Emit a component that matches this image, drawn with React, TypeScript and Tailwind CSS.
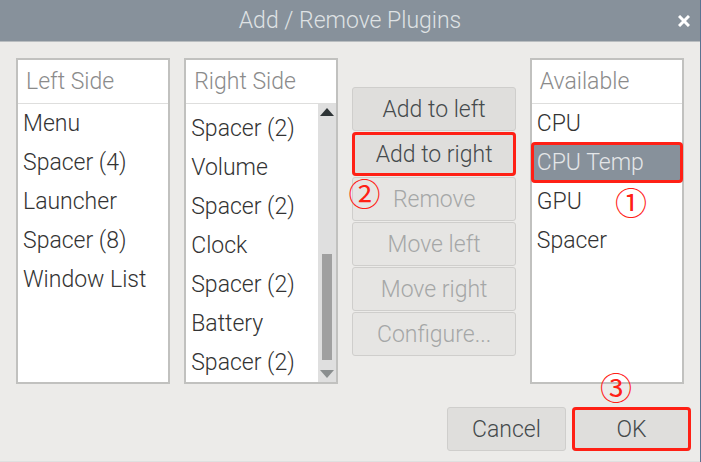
import { useState } from "react";
import type { ReactNode } from "react";

const leftItems = ["Menu", "Spacer (4)", "Launcher", "Spacer (8)", "Window List"];
const rightItems = ["Spacer (2)", "Volume", "Spacer (2)", "Clock", "Spacer (2)", "Battery", "Spacer (2)"];
const availableItems = ["CPU", "CPU Temp", "GPU", "Spacer"];

function Highlight() {
  return <span className="pointer-events-none absolute -inset-px rounded-sm border-3 border-[#ff2015]" />;
}

function Step({ className, children }: { className: string; children: ReactNode }) {
  return (
    <span
      className={`pointer-events-none absolute z-10 flex size-8 items-center justify-center font-['Noto_Sans_CJK_SC',sans-serif] text-[32px] leading-8 font-normal text-[#ff2015] ${className}`}
    >
      {children}
    </span>
  );
}

function ListPanel({
  title,
  items,
  selected,
  onSelect,
  scrollbar,
}: {
  title: string;
  items: string[];
  selected?: string;
  onSelect?: (item: string) => void;
  scrollbar?: boolean;
}) {
  return (
    <section className="flex min-w-0 flex-col border-2 border-[#c1c1bf] bg-white">
      <h2 className="h-11 border-b border-[#dededd] px-2 leading-[43px] text-[#8b8b8b]">{title}</h2>
      <div className="flex flex-1">
        <ul className={`min-w-0 flex-1 ${scrollbar ? "pt-[5px]" : ""}`}>
          {items.map((item, i) => (
            <li key={i} className="relative">
              <button
                type="button"
                onClick={() => onSelect?.(item)}
                className={`block h-[39px] w-full px-[5px] text-left leading-[39px] whitespace-nowrap ${
                  selected === item ? "bg-[#87919b] text-[#e4e6e8]" : "text-[#333333]"
                }`}
              >
                {item}
              </button>
              {selected === item && <Highlight />}
            </li>
          ))}
        </ul>
        {scrollbar && (
          <div className="flex w-[18px] flex-col items-center bg-[#dfdfdf] py-1">
            <svg className="h-2 w-[14px] fill-[#2e3436]" viewBox="0 0 14 8">
              <path d="M0 8 7 0l7 8z" />
            </svg>
            <div className="mt-[138px] mb-[10px] w-[10px] flex-1 bg-[#a0a0a0]" />
            <svg className="h-2 w-[14px] fill-[#8a8e8f]" viewBox="0 0 14 8">
              <path d="M0 0h14L7 8z" />
            </svg>
          </div>
        )}
      </div>
    </section>
  );
}

function DialogButton({
  children,
  disabled,
  highlighted,
  className = "",
}: {
  children: ReactNode;
  disabled?: boolean;
  highlighted?: boolean;
  className?: string;
}) {
  return (
    <button
      type="button"
      disabled={disabled}
      className={`relative h-11 rounded-[3px] border border-[#cfcecc] bg-[#dfdedc] pt-0.5 text-[#454a4c] disabled:bg-[#e6e5e3] disabled:text-[#a5a7a7] ${className}`}
    >
      {children}
      {highlighted && <Highlight />}
    </button>
  );
}

export default function App() {
  const [selected, setSelected] = useState("CPU Temp");

  return (
    <div className="border-r border-[#5a7391] bg-[#ecebe9] font-[Roboto,sans-serif] text-[23px] leading-8 font-light">
      <header className="relative flex h-[42px] items-center justify-center border-b border-[#b9bdc0] bg-[#87919b] text-[#dfe2e4]">
        <h1>Add / Remove Plugins</h1>
        <button type="button" aria-label="Close" className="absolute right-[10px] text-white">
          <svg className="size-3" viewBox="0 0 12 12" fill="none" stroke="currentColor" strokeWidth="3">
            <path d="m1 1 10 10M11 1 1 11" />
          </svg>
        </button>
      </header>

      <main className="grid grid-cols-[154fr_154fr_163fr_154fr] gap-x-[14px] px-4 pt-4">
        <ListPanel title="Left Side" items={leftItems} />
        <ListPanel title="Right Side" items={rightItems} scrollbar />
        <div className="relative flex flex-col justify-center gap-px">
          <DialogButton>Add to left</DialogButton>
          <DialogButton highlighted>Add to right</DialogButton>
          <DialogButton disabled>Remove</DialogButton>
          <DialogButton disabled>Move left</DialogButton>
          <DialogButton disabled>Move right</DialogButton>
          <DialogButton disabled>Configure...</DialogButton>
          <Step className="top-[118px] -left-1">②</Step>
        </div>
        <div className="relative grid">
          <ListPanel title="Available" items={availableItems} selected={selected} onSelect={setSelected} />
          <Step className="top-[127px] right-[37px]">①</Step>
        </div>
      </main>

      <footer className="relative flex justify-end gap-[6px] border-b border-[#dfe0e0] pt-[23px] pr-[9px] pb-[10px]">
        <DialogButton className="w-[119px]">Cancel</DialogButton>
        <DialogButton className="w-[119px]" highlighted>
          OK
        </DialogButton>
        <Step className="-top-[14px] right-[68px]">③</Step>
      </footer>
    </div>
  );
}
